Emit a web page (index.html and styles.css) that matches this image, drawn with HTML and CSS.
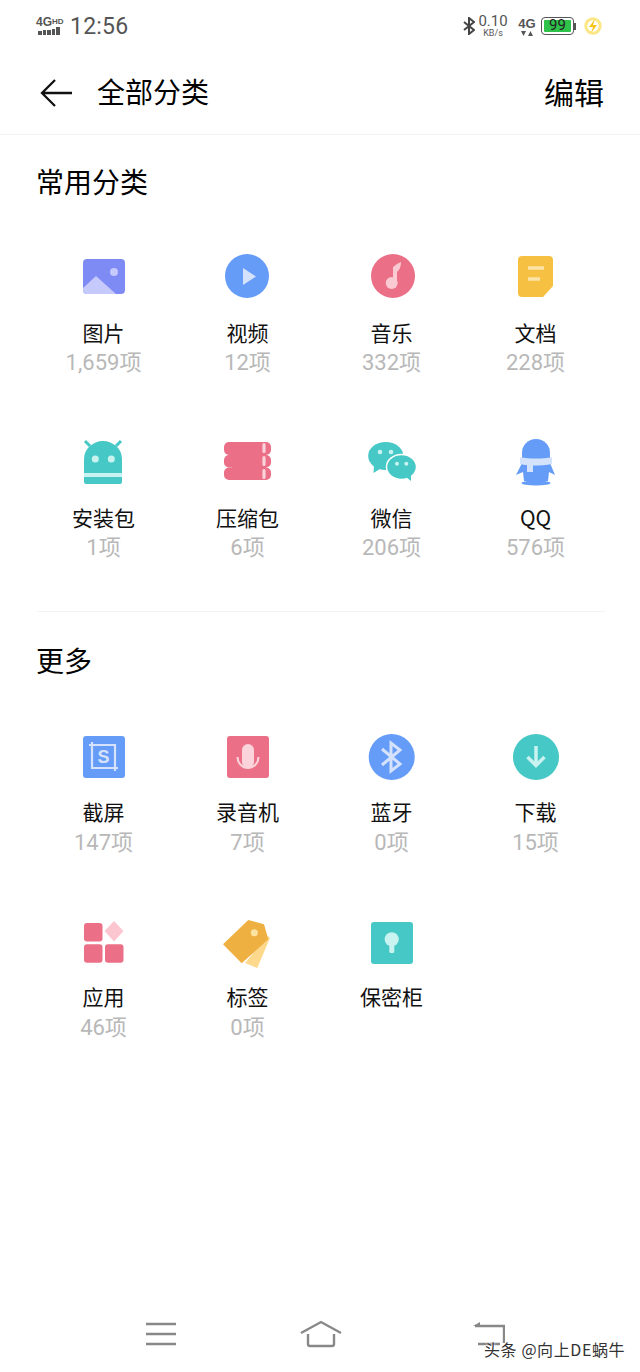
FILE: index.html
```html
<!DOCTYPE html>
<html lang="zh-CN">

<head>
  <meta charset="UTF-8">
  <meta name="viewport" content="width=device-width, initial-scale=1.0">
  <title>全部分类</title>
  <link rel="stylesheet" href="styles.css">
</head>

<body>
  <div class="page">
    <div class="status">
      <div class="status-left">
        <div class="signal">
          <div class="signal-text"><span class="net">4G</span><span class="hd">HD</span></div>
          <div class="bars"><i class="b1"></i><i class="b2"></i><i class="b3"></i><i class="b4"></i><i class="b5"></i></div>
        </div>
        <span class="time">12:56</span>
      </div>
      <div class="status-right">
        <svg class="bt" width="12" height="18" viewBox="0 0 12 18"><path d="M1 5l10 8-5 4V1l5 4L1 13" fill="none" stroke="#444" stroke-width="2"/></svg>
        <div class="speed"><span class="speed-num">0.10</span><span class="speed-unit">KB/s</span></div>
        <div class="mobile">
          <span class="mobile-net">4G</span>
          <svg class="mobile-arrows" width="12" height="5" viewBox="0 0 12 5"><path d="M0 0h5L2.500 5zM7 5h5L9.500 0z" fill="#555"/></svg>
        </div>
        <div class="battery"><div class="battery-fill">99</div></div>
        <div class="battery-cap"></div>
        <svg class="charge" width="18" height="18" viewBox="0 0 18 18"><circle cx="9" cy="9" r="7.200" fill="none" stroke="#fbe788" stroke-width="3"/><path d="M11 2L5 10h4l-2 6 6-8H9z" fill="#f5c518"/></svg>
      </div>
    </div>

    <div class="header">
      <svg class="back" width="34" height="30" viewBox="0 0 34 30"><path d="M32 15H3M15 2L2 15l13 13" fill="none" stroke="#111" stroke-width="2.300"/></svg>
      <h1 class="title">全部分类</h1>
      <span class="edit">编辑</span>
    </div>

    <div class="section section-common">
      <h2 class="section-title">常用分类</h2>
      <div class="grid">
        <div class="cell">
          <svg class="icon" viewBox="0 0 48 48"><rect x="3" y="7" width="42" height="35" rx="4" fill="#7f8bf5"/><path d="M3 36l13-12 20 18H7a4 4 0 0 1-4-4z" fill="#c5c9fb"/><circle cx="34" cy="20" r="4" fill="#c5c9fb"/></svg>
          <div class="label">图片</div><div class="count">1,659项</div>
        </div>
        <div class="cell">
          <svg class="icon" viewBox="0 0 48 48"><circle cx="23" cy="24" r="22" fill="#659cf8"/><path d="M19 16l13 8.500-13 8.500z" fill="#d5e2fb"/></svg>
          <div class="label">视频</div><div class="count">12项</div>
        </div>
        <div class="cell">
          <svg class="icon" viewBox="0 0 48 48"><circle cx="25" cy="24" r="22" fill="#ea6f87"/><circle cx="23.700" cy="31" r="6" fill="#fbc9d2"/><path d="M25 31V15q3-3 8-5q0 7-4 10v11z" fill="#fbc9d2"/></svg>
          <div class="label">音乐</div><div class="count">332项</div>
        </div>
        <div class="cell">
          <svg class="icon" viewBox="0 0 48 48"><path d="M10 4h27a4 4 0 0 1 4 4v26L31 45H10a4 4 0 0 1-4-4V8a4 4 0 0 1 4-4z" fill="#f6c143"/><path d="M16 16h16M16 27h12" stroke="#fbe3a8" stroke-width="3.500"/></svg>
          <div class="label">文档</div><div class="count">228项</div>
        </div>
        <div class="cell">
          <svg class="icon" viewBox="0 0 48 48"><path d="M4 22a19 18 0 0 1 38 0v23a2 2 0 0 1-2 2H6a2 2 0 0 1-2-2z" fill="#46c9c6"/><path d="M5 4l5 5M41 4l-5 5" stroke="#46c9c6" stroke-width="3"/><rect x="4" y="36" width="38" height="4" fill="#c9f3f0"/><circle cx="15.300" cy="22" r="3.500" fill="#c9f3f0"/><circle cx="31.300" cy="22" r="3.500" fill="#c9f3f0"/></svg>
          <div class="label">安装包</div><div class="count">1项</div>
        </div>
        <div class="cell">
          <svg class="icon" viewBox="0 0 48 48"><rect x="8" y="7" width="34" height="34" fill="#ea6f87"/><rect y="5" width="47" height="13" rx="5" fill="#ea6f87"/><rect y="18" width="47" height="12.500" rx="5" fill="#ea6f87"/><rect y="30.500" width="47" height="12.500" rx="5" fill="#ea6f87"/><path d="M40 7.500v7M40 20.500v7M40 33.500v7" stroke="#fbd3da" stroke-width="3.200" stroke-linecap="round"/></svg>
          <div class="label">压缩包</div><div class="count">6项</div>
        </div>
        <div class="cell">
          <svg class="icon" viewBox="0 0 48 48"><path d="M6 28l-.5 8 8-5z" fill="#46c9c6"/><ellipse cx="17.700" cy="19" rx="17.500" ry="14" fill="#46c9c6"/><ellipse cx="33.500" cy="30" rx="15" ry="12.500" fill="#46c9c6" stroke="#fff" stroke-width="1.500"/><path d="M38 40l5 4 0-6z" fill="#46c9c6"/><circle cx="12" cy="15" r="2.300" fill="#c9f3f0"/><circle cx="23" cy="15" r="2.300" fill="#c9f3f0"/><circle cx="29" cy="26.700" r="2" fill="#c9f3f0"/><circle cx="38.300" cy="26.700" r="2" fill="#c9f3f0"/></svg>
          <div class="label">微信</div><div class="count">206项</div>
        </div>
        <div class="cell">
          <svg class="icon" viewBox="0 0 48 48"><path d="M10 24v-8a14 14 0 0 1 28 0v8z" fill="#659cf8"/><path d="M10 26L4 38l7-3 1 9h24l1-9 6 3-5-12z" fill="#659cf8"/><ellipse cx="24" cy="46" rx="14.500" ry="2.500" fill="#659cf8"/><path d="M8 20c10 2 22 2 32 0v7c-6 1-12 1.500-19 1.500V35h-6v-7c-2 0-5-.5-7-1z" fill="#d5e2fb"/></svg>
          <div class="label">QQ</div><div class="count">576项</div>
        </div>
      </div>
    </div>

    <div class="divider"></div>

    <div class="section section-more">
      <h2 class="section-title">更多</h2>
      <div class="grid">
        <div class="cell">
          <svg class="icon" viewBox="0 0 48 48"><rect x="3" y="3" width="42" height="42" rx="3" fill="#659cf8"/><path d="M9 12h26v26M12 9v26h26" fill="none" stroke="#d5e2fb" stroke-width="2.200"/><text class="shot-s" x="23.500" y="30">S</text></svg>
          <div class="label">截屏</div><div class="count">147项</div>
        </div>
        <div class="cell">
          <svg class="icon" viewBox="0 0 48 48"><rect x="3" y="3" width="42" height="42" rx="3" fill="#ea6f87"/><rect x="18" y="11" width="12" height="24" rx="6" fill="#fbd3da"/><path d="M13.500 24a10.500 11 0 0 0 21 0" fill="none" stroke="#fbd3da" stroke-width="2"/></svg>
          <div class="label">录音机</div><div class="count">7项</div>
        </div>
        <div class="cell">
          <svg class="icon" viewBox="0 0 48 48"><circle cx="23.700" cy="24" r="23" fill="#659cf8"/><path d="M14 16l18 15-9 7V10l9 7-18 15" fill="none" stroke="#d5e2fb" stroke-width="3"/></svg>
          <div class="label">蓝牙</div><div class="count">0项</div>
        </div>
        <div class="cell">
          <svg class="icon" viewBox="0 0 48 48"><circle cx="24" cy="24" r="23" fill="#46c9c6"/><path d="M24 13v18M15.500 24l8.500 8.500 8.500-8.500" fill="none" stroke="#c9f3f0" stroke-width="3.500"/></svg>
          <div class="label">下载</div><div class="count">15项</div>
        </div>
        <div class="cell">
          <svg class="icon" viewBox="0 0 48 48"><rect x="4" y="5" width="18.500" height="18.500" rx="3" fill="#ea6f87"/><rect x="4" y="26.300" width="18.500" height="18.500" rx="3" fill="#ea6f87"/><rect x="25" y="26.300" width="18.500" height="18.500" rx="3" fill="#ea6f87"/><path d="M34 3l9.500 10-9.500 10.500L24.500 13z" fill="#fcc6d0"/></svg>
          <div class="label">应用</div><div class="count">46项</div>
        </div>
        <div class="cell">
          <svg class="icon" viewBox="0 0 48 48"><path d="M44 18l2 2-12.700 30-12.300-5z" fill="#fdd98e"/><path d="M24.300 2L40 6.300l4.300 15-26.600 24L-1 26.300z" fill="#efb042"/><circle cx="30.300" cy="14.700" r="3.500" fill="#fde3a0"/></svg>
          <div class="label">标签</div><div class="count">0项</div>
        </div>
        <div class="cell">
          <svg class="icon" viewBox="0 0 48 48"><rect x="3" y="4" width="42" height="42" rx="3" fill="#46c9c6"/><circle cx="23.700" cy="21.300" r="7" fill="#c9f3f0"/><rect x="21.300" y="24" width="5" height="11" rx="1.500" fill="#c9f3f0"/></svg>
          <div class="label">保密柜</div>
        </div>
      </div>
    </div>

    <div class="nav">
      <svg class="nav-menu" width="30" height="28" viewBox="0 0 30 28"><path d="M0 4h30M0 14h30M0 24h30" stroke="#888" stroke-width="2.400"/></svg>
      <svg class="nav-home" width="42" height="28" viewBox="0 0 42 28"><path d="M1 13L21 2l20 11M8 14v10a2 2 0 0 0 2 2h22a2 2 0 0 0 2-2V14" fill="none" stroke="#888" stroke-width="2.400"/></svg>
      <svg class="nav-back" width="32" height="28" viewBox="0 0 32 28"><path d="M2 6h29v17M5 24h22" fill="none" stroke="#888" stroke-width="2.400"/><path d="M0 6l7-4v4z" fill="#888"/></svg>
    </div>

    <div class="watermark">头条 @向上DE蜗牛</div>
  </div>
</body>

</html>
```

FILE: styles.css
```css
* {
  box-sizing: border-box;
  margin: 0;
  padding: 0;
}
body {
  background: #fff;
  color: #111;
  font-family: "Noto Sans CJK SC", "Noto Sans", sans-serif;
}
.page {
  position: relative;
  display: flex;
  flex-direction: column;
  width: 640px;
  height: 1372px;
  overflow: hidden;
}

/* status bar */
.status {
  display: flex;
  justify-content: space-between;
  align-items: center;
  height: 52px;
  padding: 0 38px 0 36px;
  color: #555;
}
.status-left,
.status-right {
  display: flex;
  align-items: center;
}
.signal {
  width: 28px;
}
.signal-text {
  display: flex;
  align-items: flex-start;
  height: 9px;
  font-family: "Liberation Sans", sans-serif;
  font-weight: 700;
  line-height: 9px;
}
.net {
  font-size: 12px;
}
.hd {
  font-size: 8px;
  line-height: 8px;
}
.bars {
  display: flex;
  align-items: flex-end;
  gap: 1px;
  height: 8px;
  margin-left: 2px;
}
.bars i {
  width: 3.500px;
  background: #555;
}
.b1 { height: 4px; }
.b2 { height: 5px; }
.b3 { height: 5px; }
.b4 { height: 6px; }
.b5 { height: 8px; }
.time {
  margin-left: 6px;
  font-family: Roboto, sans-serif;
  font-size: 23px;
  letter-spacing: 0.200px;
}
.speed {
  display: flex;
  flex-direction: column;
  align-items: center;
  width: 30px;
  margin-left: 3px;
  font-family: Roboto, sans-serif;
}
.speed-num {
  font-size: 15px;
  line-height: 15px;
}
.speed-unit {
  font-size: 9px;
  line-height: 9px;
}
.mobile {
  display: flex;
  flex-direction: column;
  align-items: center;
  width: 16px;
  margin-left: 11px;
  font-family: "Liberation Sans", sans-serif;
  font-weight: 700;
}
.mobile-net {
  font-size: 13px;
  line-height: 13px;
}
.mobile-arrows {
  margin-top: 1px;
}
.battery {
  width: 33px;
  height: 18px;
  margin-left: 6px;
  padding: 2px;
  border: 1.500px solid #555;
  border-radius: 4px;
}
.battery-fill {
  height: 100%;
  border-radius: 1px;
  background: #2fc24a;
  color: #222;
  font-family: Roboto, sans-serif;
  font-size: 15px;
  line-height: 11px;
  text-align: center;
}
.battery-cap {
  width: 2px;
  height: 7px;
  background: #555;
}
.charge {
  margin-left: 8px;
}

/* header */
.header {
  display: flex;
  align-items: center;
  height: 83px;
  padding: 0 36px 0 40px;
  border-bottom: 1px solid #f3f3f3;
}
.title {
  margin: 0 0 4px 23px;
  color: #000;
  font-size: 28px;
  font-weight: 400;
  line-height: 40px;
}
.edit {
  margin: 0 0 4px auto;
  color: #000;
  font-size: 30px;
  line-height: 40px;
}

/* sections */
.section-common {
  padding: 26px 0 50px;
}
.section-more {
  padding-top: 28px;
}
.divider {
  height: 1px;
  margin: 0 35px 0 37px;
  background: #f3f3f3;
}
.section-title {
  height: 40px;
  padding-left: 36px;
  color: #000;
  font-size: 28px;
  font-weight: 400;
  line-height: 40px;
}
.grid {
  display: grid;
  grid-template-columns: repeat(4, 144px);
  row-gap: 61px;
  padding: 51px 0 0 32px;
}
.section-more .grid {
  padding-top: 53px;
}
.cell {
  display: flex;
  flex-direction: column;
  align-items: center;
  height: 124px;
}
.icon {
  flex: none;
  width: 48px;
  height: 48px;
  overflow: visible;
}
.label {
  margin: 17px 1px 0 0;
  font-size: 21px;
  line-height: 30px;
}
.section-more .label {
  margin-top: 15px;
}
.count {
  margin: 2px 1px 0 0;
  color: #b8b8b8;
  font-family: Roboto, "Noto Sans CJK SC", sans-serif;
  font-size: 22px;
  line-height: 27px;
}
.section-more .count {
  margin-top: 3px;
}
.shot-s {
  fill: #d5e2fb;
  font-family: "Liberation Sans", sans-serif;
  font-size: 18px;
  font-weight: 700;
  text-anchor: middle;
}

/* bottom nav */
.nav {
  display: flex;
  align-items: center;
  gap: 124px;
  margin-top: auto;
  padding: 0 0 24px 146px;
}
.nav-back {
  margin-left: 7px;
}
.watermark {
  position: absolute;
  left: 484px;
  bottom: 12px;
  color: #333;
  font-size: 16px;
  letter-spacing: 0.600px;
  line-height: 22px;
  text-shadow: 0 0 2px #fff, 0 0 2px #fff;
}
```
